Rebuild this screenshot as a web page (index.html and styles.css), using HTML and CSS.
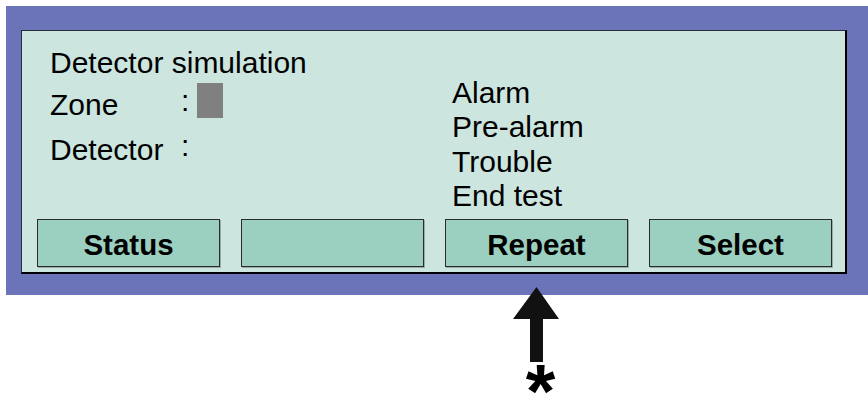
FILE: index.html
```html
<!DOCTYPE html>
<html lang="en">
<head>
    <meta charset="UTF-8">
    <title>Detector simulation</title>
    <link rel="stylesheet" href="styles.css">
</head>
<body>
    <div class="frame">
        <div class="panel">
            <div class="top">
                <div class="fields">
                    <div class="title">Detector simulation</div>
                    <div>Zone</div>
                    <div class="colon">:</div>
                    <div class="cursor"></div>
                    <div>Detector</div>
                    <div class="colon">:</div>
                    <div></div>
                </div>
                <ul class="options">
                    <li>Alarm</li>
                    <li>Pre-alarm</li>
                    <li>Trouble</li>
                    <li>End test</li>
                </ul>
            </div>
            <div class="keys">
                <div class="key">Status</div>
                <div class="key"></div>
                <div class="key">Repeat</div>
                <div class="key">Select</div>
            </div>
        </div>
    </div>

    <div class="pointer">
        <svg width="47" height="75" viewBox="0 0 47 75">
            <polygon points="23.5,0 46,32 30,32 30,75 17,75 17,32 0,32" fill="#111"/>
        </svg>
        <div class="star">*</div>
    </div>
</body>
</html>
```

FILE: styles.css
```css
body {
    margin: 0;
    background-color: #fff;
    font-family: "Liberation Sans", Arial, sans-serif;
    color: #000;
    overflow: hidden;
}

.frame {
    margin: 6px 0 0 6px;
    width: 862px;
    height: 289px;
    box-sizing: border-box;
    padding: 24px 0 0 15px;
    background-color: #6b74b8;
}

.panel {
    width: 826px;
    box-sizing: border-box;
    padding: 15px 0 5px 0;
    background-color: #cce5df;
    border: 1px solid #2a2d3a;
    border-right: 2px solid #000;
    border-bottom: 2px solid #000;
}

.top {
    display: flex;
    font-size: 30px;
}

.fields {
    width: 430px;
    box-sizing: border-box;
    padding-left: 28px;
    display: grid;
    grid-template-columns: 131px 16px auto;
    grid-template-rows: 42px 45px 34px;
    line-height: 34px;
    align-items: start;
}

.title {
    grid-column: 1 / 4;
}

.colon {
    line-height: 26px;
}

.cursor {
    width: 26px;
    height: 35px;
    margin-top: -5px;
    background-color: #808080;
}

.options {
    list-style: none;
    margin: 29.5px 0 0 0;
    padding: 0;
    line-height: 34.5px;
}

.keys {
    display: grid;
    grid-template-columns: repeat(4, 183px);
    column-gap: 21px;
    margin: 5px 0 0 15px;
}

.key {
    height: 48px;
    box-sizing: border-box;
    padding-top: 5px;
    border: 1px solid #2b2b2b;
    box-shadow: 1px 1px 0 rgba(0, 0, 0, 0.25);
    background-color: #9bd0c0;
    font-size: 29.5px;
    font-weight: bold;
    line-height: 40px;
    text-align: center;
}

.pointer {
    width: 47px;
    margin: -8px 0 0 513px;
    display: flex;
    flex-direction: column;
    align-items: center;
}

.pointer svg {
    display: block;
}

.star {
    margin: 24px 0 0 8px;
    font-size: 76px;
    font-weight: bold;
    line-height: 10px;
    height: 10px;
}
```
